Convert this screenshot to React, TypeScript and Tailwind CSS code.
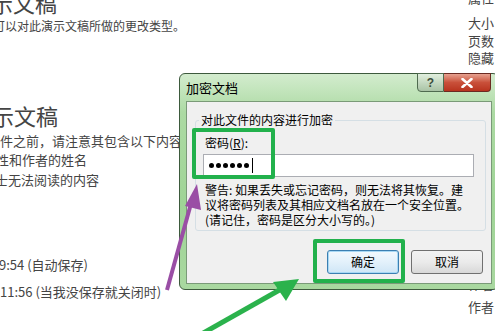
const CJK = { fontFamily: '"Microsoft YaHei", "Noto Sans CJK SC", "Noto Sans", sans-serif' };

function Background() {
  return (
    <div className="flex w-full h-full text-[#444]">
      {/* left column of the backstage page */}
      <div className="flex flex-col">
        <div className="text-[22px] leading-[26px] mt-[-11px] ml-[-31px] whitespace-nowrap">演示文稿</div>
        <div className="text-[12px] leading-[18px] mt-[2px] ml-[-19px] whitespace-nowrap">您可以对此演示文稿所做的更改类型。</div>
        <div className="text-[22px] leading-[26px] mt-[67px] ml-[-30px] whitespace-nowrap">演示文稿</div>
        <div className="text-[13px] leading-[18px] mt-[4px] whitespace-nowrap">件之前，请注意其包含以下内容</div>
        <div className="text-[13px] leading-[18px] mt-[1px] ml-[-17px] whitespace-nowrap">属性和作者的姓名</div>
        <div className="text-[13px] leading-[18px] mt-[2px] ml-[-18px] whitespace-nowrap">人士无法阅读的内容</div>
        <div className="text-[13px] leading-[18px] mt-[67px] ml-[-1px] whitespace-nowrap">9:54 (自动保存)</div>
        <div className="text-[13px] leading-[18px] mt-[9px] ml-[0px] whitespace-nowrap">11:56 (当我没保存就关闭时)</div>
      </div>
      {/* right properties column */}
      <div className="flex flex-col ml-auto mr-[-8px] w-[35px] text-[13px] leading-[18px]">
        <div className="mt-[-11px]">属性</div>
        <div className="mt-[7px]">大小</div>
        <div className="mt-[0px]">页数</div>
        <div className="mt-[-1px]">隐藏</div>
        <div className="mt-[208px]">作者</div>
        <div className="mt-[5px]">作者</div>
      </div>
    </div>
  );
}

function Dialog() {
  return (
    <div
      className="absolute left-[179px] top-[73px] w-[320px] h-[217px] rounded-[6px] border border-[#3d5a3d] flex flex-col"
      style={{ background: "linear-gradient(180deg,#d3ecce 0%,#acdaa3 18%,#9fd496 60%,#a9d8a0 100%)" }}
    >
      {/* title bar */}
      <div className="flex items-start h-[27px] relative">
        <div className="text-[13px] leading-[16px] text-black mt-[6px] ml-[6px]">加密文档</div>
        <div className="ml-auto mr-[7px] flex h-[19px] mt-[-1px]">
          <div className="w-[27px] h-full border border-[#4f6b4f] rounded-bl-[4px] flex items-center justify-center text-[12px] font-bold text-[#3b4d3b] bg-gradient-to-b from-[#e1efde] to-[#a9c3a5]" style={{ fontFamily: "Liberation Sans, sans-serif" }}>?</div>
          <div className="w-[47px] h-full border border-l-0 border-[#6b2a22] rounded-br-[4px] flex items-center justify-center bg-gradient-to-b from-[#e6a190] via-[#c9503a] to-[#b8331e]">
            <svg width="12" height="10" viewBox="0 0 12 10">
              <path d="M1.5 1 L10.5 9 M10.5 1 L1.5 9" stroke="#fff" strokeWidth="2.6" strokeLinecap="round" />
            </svg>
          </div>
        </div>
      </div>
      {/* client area */}
      <div className="mx-[6px] h-[183px] bg-[#f0f0f0] border border-[#7a9a78] flex flex-col">
        <div className="mt-[18px] ml-[8px] mr-[5px] h-[111px] border border-[#d5dfe5] rounded-[3px] relative flex flex-col px-[7px]">
          <div className="absolute left-[3px] top-[-10px] px-[2px] bg-[#f0f0f0] text-[12px] leading-[18px] text-black">对此文件的内容进行加密</div>
          <div className="mt-[14px] ml-[2px] text-[12px] leading-[16px] text-black">
            密码(<span className="underline">R</span>):
          </div>
          <div className="mt-[3px] w-[271px] h-[23px] bg-white border border-[#abadb3] flex items-center pl-[5px] gap-[2px]">
            {[0, 1, 2, 3, 4, 5].map(i => (
              <span key={i} className="w-[5px] h-[5px] rounded-full bg-black" />
            ))}
            <span className="w-px h-[15px] bg-black ml-[1px]" />
          </div>
          <div className="mt-[5px] ml-[2px] text-[12px] leading-[15px] text-black whitespace-nowrap">
            <div>警告: 如果丢失或忘记密码，则无法将其恢复。建</div>
            <div>议将密码列表及其相应文档名放在一个安全位置。</div>
            <div>(请记住，密码是区分大小写的。)</div>
          </div>
        </div>
        <div className="flex justify-end gap-[12px] mt-[19px] mr-[8px]">
          <button className="w-[72px] h-[24px] rounded-[3px] border border-[#3c7fb1] text-[12px] text-black bg-gradient-to-b from-[#f2f9fd] via-[#e3f1fb] to-[#cfe6f6] shadow-[inset_0_0_0_1px_#a8d8f4]">确定</button>
          <button className="w-[72px] h-[24px] rounded-[3px] border border-[#707070] text-[12px] text-black bg-gradient-to-b from-[#f2f2f2] via-[#ebebeb] to-[#d8d8d8]">取消</button>
        </div>
      </div>
    </div>
  );
}

function Marks() {
  return (
    <>
      <div className="absolute left-[192px] top-[128px] w-[83px] h-[51px] border-[4px] border-[#22b14c] rounded-[2px]" />
      <div className="absolute left-[313px] top-[239px] w-[92px] h-[44px] border-[4px] border-[#22b14c] rounded-[2px]" />
      <svg className="absolute inset-0" width="495" height="331" viewBox="0 0 495 331">
        <line x1="167" y1="290" x2="192" y2="200" stroke="#9a4ea5" strokeWidth="4" />
        <polygon points="197,184 185,206 201,210" fill="#9a4ea5" />
        <line x1="198" y1="336" x2="283" y2="288" stroke="#2bb24c" strokeWidth="5" />
        <polygon points="299,279 273,282 286,301" fill="#2bb24c" />
      </svg>
    </>
  );
}

export default function App() {
  return (
    <div className="relative w-[495px] h-[331px] overflow-hidden bg-white" style={CJK}>
      <Background />
      <Dialog />
      <Marks />
    </div>
  );
}
